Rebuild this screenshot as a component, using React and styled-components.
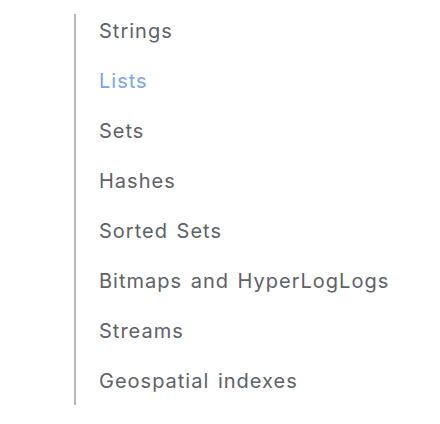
import { createGlobalStyle, styled } from "styled-components";

const GlobalStyle = createGlobalStyle`
    body {
        margin: 0;
        background: #fff;
        font-family: Inter, "Open Sans", sans-serif;
    }
`;

const Page = styled.div`
    padding: 14px 0 0 74px;
`;

const Menu = styled.ul`
    list-style: none;
    margin: 0;
    padding: 2px 0 9px 23px;
    border-left: 2px solid #b4b6ba;
    width: 330px;
    display: flex;
    flex-direction: column;
    gap: 20px;
`;

const Item = styled.li`
    line-height: 30px;
    font-size: 20px;
    letter-spacing: 1px;
    word-spacing: 2px;
    color: ${({ active }) => (active ? "#7aa5e6" : "#5d6168")};
    white-space: nowrap;
`;

const items = [
    "Strings",
    "Lists",
    "Sets",
    "Hashes",
    "Sorted Sets",
    "Bitmaps and HyperLogLogs",
    "Streams",
    "Geospatial indexes",
];

export default function App() {
    return (
        <Page>
            <GlobalStyle />
            <Menu>
                {items.map((name) => (
                    <Item key={name} active={name === "Lists"}>
                        {name}
                    </Item>
                ))}
            </Menu>
        </Page>
    );
}
